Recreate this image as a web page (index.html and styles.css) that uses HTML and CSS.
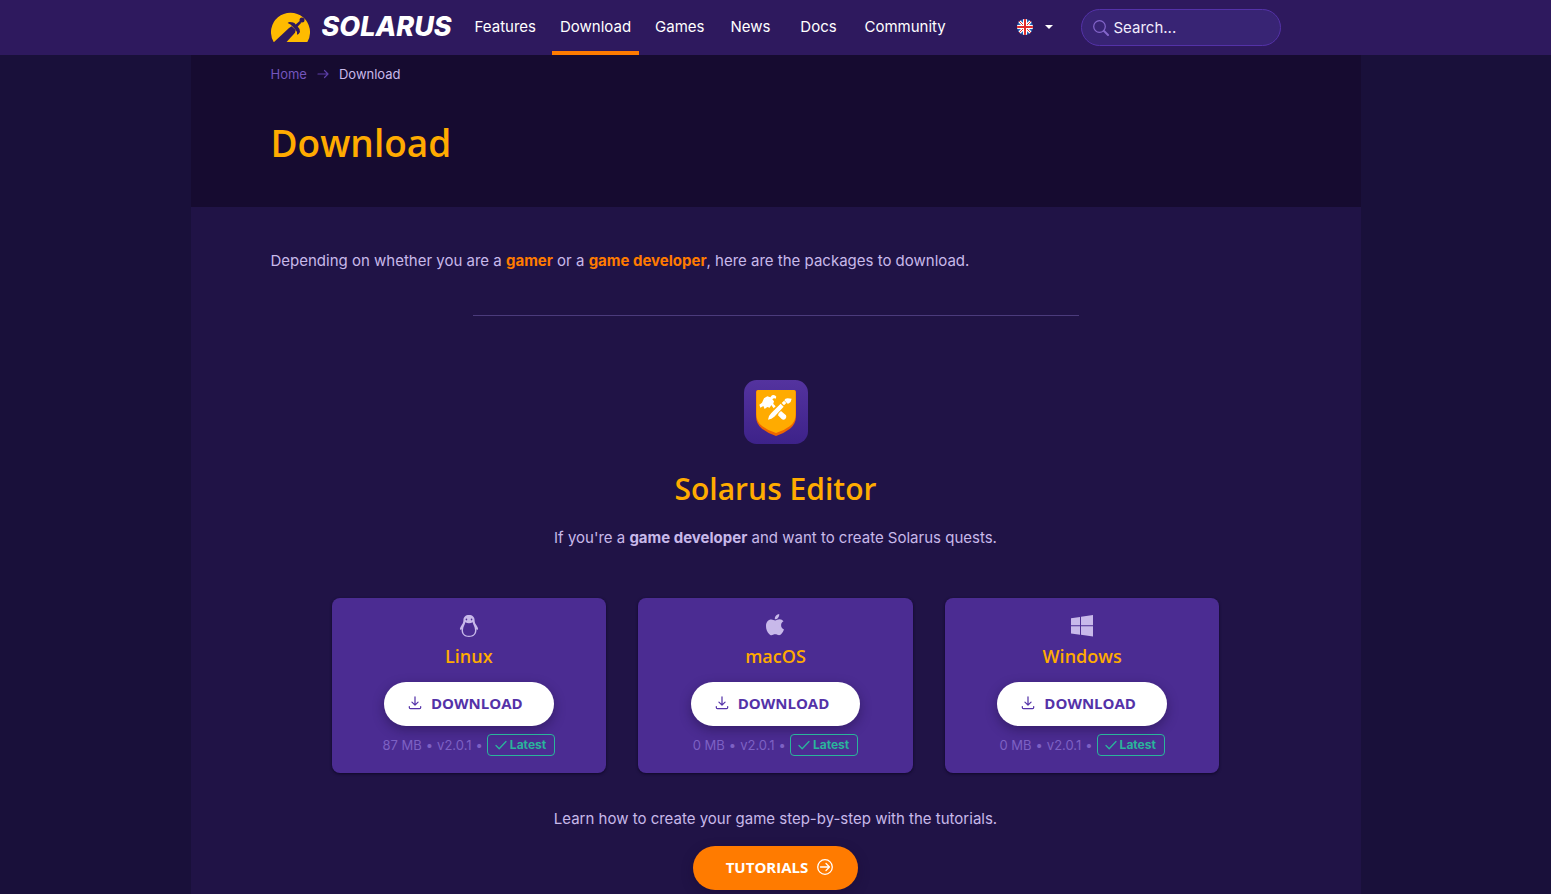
FILE: index.html
```html
<!DOCTYPE html>
<html lang="en">
<head>
<meta charset="utf-8">
<meta name="viewport" content="width=device-width, initial-scale=1">
<title>Download - Solarus</title>
<link rel="stylesheet" href="styles.css">
</head>
<body>
<svg class="sprite" aria-hidden="true">
  <symbol id="i-download" viewBox="0 0 16 16">
    <path d="M8 1v9M4.500 7 8 10.400 11.500 7M1.500 12v1.200q0 1.300 1.300 1.300h10.400q1.300 0 1.300-1.300V12" fill="none" stroke="currentColor" stroke-width="1.400" stroke-linecap="round" stroke-linejoin="round"/>
  </symbol>
  <symbol id="i-check" viewBox="0 0 12 12">
    <path d="M1 6.500 4.200 9.800 11 2.500" fill="none" stroke="currentColor" stroke-width="1.300" stroke-linecap="round" stroke-linejoin="round"/>
  </symbol>
</svg>
<header class="site-header">
  <div class="bar">
    <a class="brand" href="#">
      <svg class="brand-mark" viewBox="30 36 117 90" aria-hidden="true">
        <path fill="#fb0" d="M38 126A58.500 58.500 0 1 1 139 126Z"/>
        <g fill="#2e195e">
          <path d="M36 129 84 84 92 79 104 90 102 98 74 129Z"/>
          <circle cx="123" cy="60" r="7.500"/>
          <path d="M98 79 116 63 121 68 106 84Z"/>
          <path d="M80 69Q84 64 92 67 101 66 105 75L111 81Q119 88 117 96 113 104 108 104 110 95 104 90L94 79Q90 73 80 69Z"/>
        </g>
      </svg>
      <span class="brand-name">SOLARUS</span>
    </a>
    <nav class="nav" aria-label="Main">
      <a href="#">Features</a>
      <a class="active" href="#" aria-current="page">Download</a>
      <a href="#">Games</a>
      <a href="#">News</a>
      <a href="#">Docs</a>
      <a href="#">Community</a>
    </nav>
    <button class="language" type="button" aria-label="Language">
      <svg class="flag" viewBox="0 0 16 16" aria-hidden="true">
        <clipPath id="round"><circle cx="8" cy="8" r="8"/></clipPath>
        <g clip-path="url(#round)">
          <path fill="#2362b4" d="M0 0h16v16H0z"/>
          <path stroke="#fff" stroke-width="3" d="m0 0 16 16M16 0 0 16"/>
          <path stroke="#e03030" stroke-width="1" d="m0 0 16 16M16 0 0 16"/>
          <path stroke="#fff" stroke-width="4" d="M8 0v16M0 8h16"/>
          <path stroke="#e02c2c" stroke-width="2" d="M8 0v16M0 8h16"/>
        </g>
      </svg>
      <svg class="caret" viewBox="0 0 8 4" aria-hidden="true"><path fill="#fff" d="M0 0h8L4 4z"/></svg>
    </button>
    <form class="search" role="search">
      <svg viewBox="0 0 16 16" aria-hidden="true"><circle cx="6.500" cy="6.500" r="5.800" fill="none" stroke="currentColor" stroke-width="1.200"/><path d="m11 11 4 4" stroke="currentColor" stroke-width="2" stroke-linecap="round"/></svg>
      <input type="text" placeholder="Search..." aria-label="Search">
    </form>
  </div>
</header>
<main class="page">
  <div class="page-head">
    <nav class="crumbs" aria-label="Breadcrumb">
      <a href="#">Home</a>
      <svg viewBox="0 0 12 10" aria-hidden="true"><path d="M1 5h10M7.500 1.500 11 5 7.500 8.500" fill="none" stroke="currentColor" stroke-width="1.200" stroke-linecap="round" stroke-linejoin="round"/></svg>
      <span>Download</span>
    </nav>
    <h1>Download</h1>
  </div>
  <div class="content">
    <p>Depending on whether you are a <a href="#">gamer</a> or a <a href="#">game developer</a>, here are the packages to download.</p>
    <hr>
    <section class="product">
      <svg class="product-icon" viewBox="24 24 192 192" aria-hidden="true">
        <defs><linearGradient id="tile" x2="0" y2="1"><stop stop-color="#54339f"/><stop offset="1" stop-color="#3d2289"/></linearGradient></defs>
        <rect x="24" y="24" width="192" height="192" rx="38" fill="url(#tile)"/>
        <path fill="#ee6500" d="M60 60q0-6 6-6h108q6 0 6 6v72q0 24-18 38-20 15-42 22-22-7-42-22-18-14-18-38z"/>
        <path fill="#ffab00" d="M61 60q0-6 6-6h106q6 0 6 6v66q0 24-18 37-18 14-41 20-23-6-41-20-18-13-18-37z"/>
        <g fill="#fff">
          <path d="M70 98 78 92 84 79 94 73 103 76 108 70Q116 66 121 74L119 80Q114 76 109 82L114 88 112 95 106 99 101 107 94 105 86 111 82 102 73 107Z"/>
          <path d="M104 97 109 93 119 103 113 109ZM128 124 135 117 150 130Q153 135 148 141 142 145 137 141L126 130Z"/>
          <path d="M96 143Q98 130 106 123L134 95 143 104 115 134Q107 141 96 143Z"/>
          <path d="M137 93 144 86 151 93 144 100ZM145 85Q147 79 155 79L167 80Q165 91 159 94 155 97 152 92Z"/>
        </g>
      </svg>
      <h2>Solarus Editor</h2>
      <p>If you're a <strong>game developer</strong> and want to create Solarus quests.</p>
      <div class="cards">
        <article class="card">
          <svg class="os" viewBox="0 0 24 24" aria-hidden="true">
            <path fill="currentColor" fill-rule="evenodd" d="M12 1C8.500 1 6.400 3 6.400 6.200c0 2.300-.8 3.600-2 5.400C3.400 13.200 2.600 15 3 15.500c.3.500 1.200 0 1.500-.2C4.300 20.500 7.500 23 12 23s7.700-2.500 7.500-7.700c.3.200 1.200.7 1.500.2.400-.5-.4-2.300-1.400-3.900-1.200-1.800-2-3.100-2-5.400C17.600 3 15.500 1 12 1ZM8.300 8.200Q12 10.500 15.700 8.200C15.900 10.500 18 12.500 18 16.200 18 20 15.800 21.700 12 21.700S6 20 6 16.200C6 12.500 8.100 10.500 8.300 8.200ZM9.400 4.500a.8.900 0 1 0 .1 0ZM14.500 4.500a.8.900 0 1 0 .1 0Z"/>
          </svg>
          <h3>Linux</h3>
          <button class="btn" type="button"><svg aria-hidden="true"><use href="#i-download"/></svg>DOWNLOAD</button>
          <div class="meta"><span>87 MB</span><span>•</span><span>v2.0.1</span><span>•</span><span class="badge"><svg aria-hidden="true"><use href="#i-check"/></svg>Latest</span></div>
        </article>
        <article class="card">
          <svg class="os" viewBox="0 0 24 24" aria-hidden="true">
            <path fill="currentColor" d="M16.200 0c.2 1.700-.4 2.900-1.200 3.900-.8.900-1.900 1.400-3.200 1.300-.1-1.500.5-2.700 1.300-3.600C13.900.7 15.200.1 16.200 0ZM20.500 7.300c-1.700 1.100-2.400 2.300-2.400 3.900 0 2 1.100 3.500 2.900 4.200-.6 1.800-1.500 3.300-2.700 4.700-1.500 1.600-2.500 1.300-4 .7-1.500-.6-2.700-.6-4.200 0-1.600.7-2.600.7-4-.9C3.900 17.500 3 14.900 3 11.900c0-4 2.300-6.500 5.300-6.500 1.600 0 2.700 1 3.900 1 1.100 0 2.400-1.100 4.400-1.100 1.600 0 2.900.7 3.900 2Z"/>
          </svg>
          <h3>macOS</h3>
          <button class="btn" type="button"><svg aria-hidden="true"><use href="#i-download"/></svg>DOWNLOAD</button>
          <div class="meta"><span>0 MB</span><span>•</span><span>v2.0.1</span><span>•</span><span class="badge"><svg aria-hidden="true"><use href="#i-check"/></svg>Latest</span></div>
        </article>
        <article class="card">
          <svg class="os" viewBox="0 0 24 24" aria-hidden="true">
            <path fill="currentColor" d="M1 4.300 10 3v8.200H1zM11 2.800 23 1v10.200H11zM1 12.300h9v8.400l-9-1.300zM11 12.300h12v10.200l-12-1.700z"/>
          </svg>
          <h3>Windows</h3>
          <button class="btn" type="button"><svg aria-hidden="true"><use href="#i-download"/></svg>DOWNLOAD</button>
          <div class="meta"><span>0 MB</span><span>•</span><span>v2.0.1</span><span>•</span><span class="badge"><svg aria-hidden="true"><use href="#i-check"/></svg>Latest</span></div>
        </article>
      </div>
      <p>Learn how to create your game step-by-step with the tutorials.</p>
      <a class="btn btn-primary" href="#">TUTORIALS
        <svg viewBox="0 0 16 16" aria-hidden="true"><g fill="none" stroke="currentColor" stroke-width="1.300" stroke-linecap="round" stroke-linejoin="round"><circle cx="8" cy="8" r="7.300"/><path d="M3.500 8h9M9 4.500 12.500 8 9 11.500"/></g></svg>
      </a>
    </section>
  </div>
</main>
</body>
</html>
```

FILE: styles.css
```css
* { box-sizing: border-box; }
body {
  margin: 0;
  min-height: 100vh;
  display: flex;
  flex-direction: column;
  background: #19103a;
  color: #c8b9ea;
  font: 15px/24px Inter, "Liberation Sans", sans-serif;
}
a { color: inherit; text-decoration: none; }
h1, h2, h3, p { margin: 0; }
button, input { font: inherit; }
.sprite { display: none; }

.site-header { background: #2e195e; color: #fff; }
.bar {
  display: flex;
  align-items: center;
  width: 100%;
  max-width: 1170px;
  height: 55px;
  margin: 0 auto;
  padding: 0 80px;
}
.brand { display: flex; align-items: center; gap: 12px; padding-bottom: 2px; }
.brand-mark { width: 39px; height: 30px; }
.brand-name { font-size: 27px; font-style: italic; font-weight: 800; }
.nav { display: flex; align-self: stretch; gap: 8px; margin-left: 15px; }
.nav a {
  min-width: 60px;
  padding: 15px 8px 12px;
  border-bottom: 4px solid transparent;
  text-align: center;
}
.nav .active { border-color: #ff7b00; }
.language {
  display: flex;
  align-items: center;
  gap: 12px;
  margin-left: auto;
  padding: 0 0 2px;
  border: 0;
  background: none;
}
.flag { width: 16px; height: 16px; }
.caret { width: 8px; height: 4px; }
.search {
  display: flex;
  align-items: center;
  gap: 5px;
  width: 200px;
  height: 37px;
  margin-left: 28px;
  padding: 0 11px;
  border: 1px solid #5432a8;
  border-radius: 20px;
  background: #382474;
  color: #8466cb;
}
.search svg { flex: none; width: 16px; height: 16px; }
.search input {
  flex: 1;
  min-width: 0;
  padding: 0;
  border: 0;
  outline: 0;
  background: none;
  color: #fff;
}
.search input::placeholder { color: #f1ecfc; opacity: 1; }

.page {
  flex: 1;
  width: 100%;
  max-width: 1170px;
  margin: 0 auto;
  background: #201346;
}
.page-head { padding: 7px 80px 40px; background: #160b30; }
.crumbs { display: flex; align-items: center; gap: 10px; font-size: 13px; }
.crumbs a { color: #7455bd; }
.crumbs svg { width: 12px; height: 10px; color: #5c3fa8; }
h1, h2, h3, .btn { font-family: "Open Sans", "Noto Sans", sans-serif; }
h1, h2, h3 { color: #ffab00; font-weight: 600; }
h1 { margin-top: 33px; font-size: 37px; line-height: 48px; }

.content { padding: 42px 80px 4px; }
.content p a { color: #ff7b00; font-weight: 700; }
hr {
  width: 60%;
  margin: 42px auto 64px;
  border: 0;
  border-top: 1px solid #4b3b7c;
}
.product { display: flex; flex-direction: column; align-items: center; text-align: center; }
.product-icon { width: 64px; height: 64px; }
h2 { margin: 25px 0 17px; font-size: 30px; line-height: 40px; }
.cards {
  display: grid;
  grid-template-columns: repeat(3, 1fr);
  gap: 32px;
  width: 100%;
  max-width: 888px;
  margin: 48px 0 34px;
}
.card {
  display: flex;
  flex-direction: column;
  align-items: center;
  padding: 16px 16px 17px;
  border-radius: 8px;
  background: #4b2c92;
  box-shadow: 0 1px 3px #0f0828;
}
.os { width: 24px; height: 24px; }
h3 { margin: 6px 0 14px; font-size: 18px; line-height: 24px; }
.btn {
  display: flex;
  align-items: center;
  justify-content: center;
  gap: 9px;
  height: 44px;
  padding: 0 31px 2px 24px;
  border: 0;
  border-radius: 22px;
  background: #fff;
  box-shadow: 0 4px 12px rgba(22, 11, 48, .4);
  color: #5432a8;
  font-size: 15px;
  font-weight: 700;
}
.btn svg { width: 14px; height: 14px; }
.meta {
  display: flex;
  align-items: center;
  gap: 4px;
  margin-top: 8px;
  color: #7d61c4;
  font-size: 13px;
  line-height: 22px;
}
.badge {
  display: flex;
  align-items: center;
  gap: 3px;
  padding: 0 8px 0 7px;
  border: 1px solid #2ab59b;
  border-radius: 4px;
  color: #2ab59b;
  font-size: 12px;
  font-weight: 700;
  line-height: 20px;
}
.badge svg { width: 12px; height: 12px; }
.btn-primary {
  margin-top: 15px;
  padding: 0 25px 2px 33px;
  background: #ff7b00;
  color: #fff;
}
.btn-primary svg { width: 16px; height: 16px; }
```
